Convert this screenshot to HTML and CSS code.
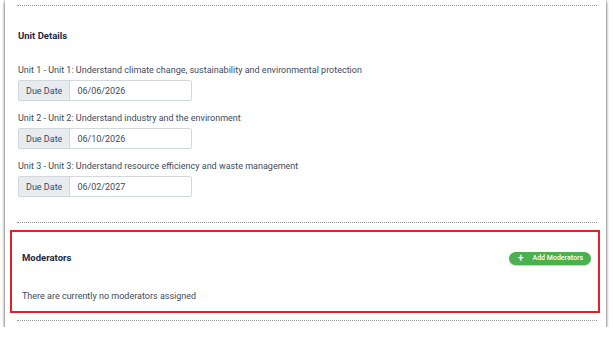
FILE: index.html
```
<!DOCTYPE html>
<html lang="en">
<head>
    <meta charset="UTF-8">
    <title>Unit Details</title>
    <link rel="stylesheet" href="styles.css">
</head>
<body>
    <div class="card">
        <div class="divider"></div>

        <div class="section">
            <h3 class="section-title">Unit Details</h3>

            <div class="unit">
                <p class="unit-name">Unit 1 - Unit 1: Understand climate change, sustainability and environmental protection</p>
                <div class="input-group">
                    <span class="addon">Due Date</span>
                    <span class="value">06/06/2026</span>
                </div>
            </div>

            <div class="unit">
                <p class="unit-name">Unit 2 - Unit 2: Understand industry and the environment</p>
                <div class="input-group">
                    <span class="addon">Due Date</span>
                    <span class="value">06/10/2026</span>
                </div>
            </div>

            <div class="unit">
                <p class="unit-name">Unit 3 - Unit 3: Understand resource efficiency and waste management</p>
                <div class="input-group">
                    <span class="addon">Due Date</span>
                    <span class="value">06/02/2027</span>
                </div>
            </div>
        </div>

        <div class="divider"></div>

        <!-- highlighted block -->
        <div class="moderators">
            <div class="moderators-head">
                <h3 class="section-title">Moderators</h3>
                <button class="add-btn"><span class="plus">+</span> Add Moderators</button>
            </div>
            <p class="empty">There are currently no moderators assigned</p>
        </div>

        <div class="divider"></div>
    </div>
</body>
</html>
```

FILE: styles.css
```
body {
    margin: 0;
    background-color: #fff;
    font-family: Roboto, "Liberation Sans", sans-serif;
    color: #3e4a5b;
}
.card {
    margin: 0 7px 0 5px;
    padding: 5px 9px 6px 12px;
    background-color: #fff;
    box-shadow: 0 3px 3px rgba(0, 0, 0, 0.45), -1px 0 2px rgba(0, 0, 0, 0.25), 1px 0 2px rgba(0, 0, 0, 0.25);
}
.divider {
    border-top: 1px dotted #9a9a9a;
}
.section {
    padding: 23px 0 25px 1px;
}
.section-title {
    margin: 0;
    font-size: 9.5px;
    font-weight: bold;
    color: #1d2a45;
    line-height: 14px;
}
.unit {
    margin-top: 20px;
}
.unit + .unit {
    margin-top: 10px;
}
.unit-name {
    margin: 0 0 3px;
    font-size: 9px;
    line-height: 14px;
}
.input-group {
    display: flex;
    width: 174px;
    height: 21px;
    border: 1px solid #d3d8de;
    border-radius: 2px;
    box-sizing: border-box;
    font-size: 9px;
}
.addon {
    display: flex;
    align-items: center;
    padding: 0 7px;
    background-color: #e9ecef;
    border-right: 1px solid #d3d8de;
    color: #3e4a5b;
}
.value {
    display: flex;
    align-items: center;
    padding: 0 7px;
}
.moderators {
    margin: 7px -3px 7px -7px;
    padding: 19px 7px 8px 10px;
    border: 2px solid #e3202b;
}
.moderators-head {
    display: flex;
    justify-content: space-between;
    align-items: center;
}
.add-btn {
    display: flex;
    align-items: center;
    gap: 9px;
    height: 13px;
    padding: 0 8px 0 9px;
    border: none;
    border-radius: 7px;
    background-color: #4caf50;
    color: #fff;
    font-family: Roboto, "Liberation Sans", sans-serif;
    font-size: 7px;
    font-weight: 500;
    box-shadow: 0 1px 1px rgba(0, 0, 0, 0.2);
}
.plus {
    font-size: 10px;
    line-height: 1;
}
.empty {
    margin: 24px 0 0;
    font-size: 9px;
    line-height: 14px;
}
```
